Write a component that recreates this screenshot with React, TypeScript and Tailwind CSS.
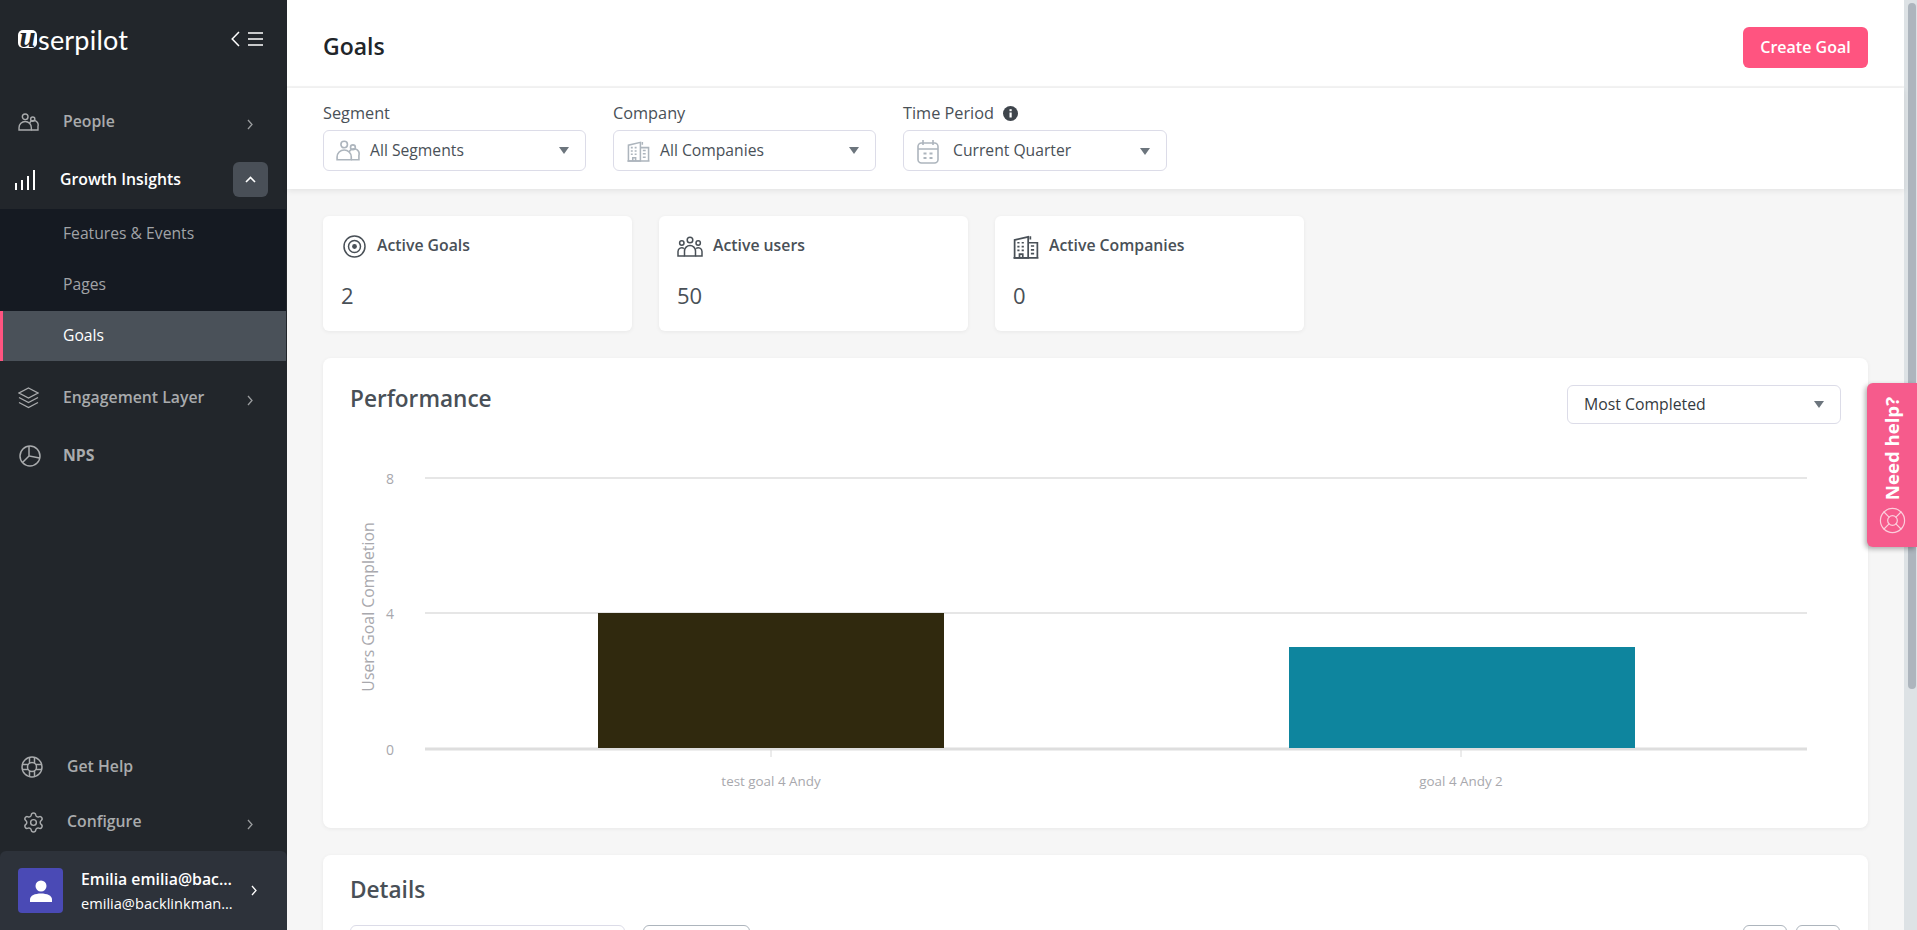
import React from "react";
import { LifeBuoy, Settings } from "lucide-react";

const SmallChevron = ({ className = "" }: { className?: string }) => (
  <svg width="6" height="11" viewBox="0 0 6 11" fill="none" stroke="currentColor" strokeWidth="1.3" className={className}>
    <path d="M1 1l4 4.500L1 10" />
  </svg>
);

const PeopleIcon = ({ className = "" }: { className?: string }) => (
  <svg viewBox="0 0 22 19" fill="none" stroke="currentColor" strokeWidth="1.5" className={className}>
    <circle cx="7.500" cy="4" r="3" />
    <path d="M1 18v-2.500a6.500 6.500 0 0 1 13 0V18z" />
    <circle cx="15.500" cy="6.500" r="2.200" />
    <path d="M12 11.200a4.500 4.500 0 0 1 9 2.800V18h-7" />
  </svg>
);

const BarsIcon = () => (
  <svg width="20" height="20" viewBox="0 0 20 20" fill="#fff">
    <rect x="0" y="13" width="2" height="7" />
    <rect x="6" y="10" width="2" height="10" />
    <rect x="12" y="6" width="2" height="14" />
    <rect x="18" y="0" width="2" height="20" />
  </svg>
);

const LayersIcon = () => (
  <svg width="21" height="22" viewBox="0 0 21 22" fill="none" stroke="currentColor" strokeWidth="1.400">
    <path d="M10.500 1L20 6l-9.500 5L1 6z" />
    <path d="M1 10.500l9.500 5 9.500-5" />
    <path d="M1 15.500l9.500 5 9.500-5" />
  </svg>
);

const PieIcon = () => (
  <svg width="22" height="22" viewBox="0 0 22 22" fill="none" stroke="currentColor" strokeWidth="1.500">
    <circle cx="11" cy="11" r="10" />
    <path d="M10 1v10l10.500 2M10 11l-6.500 6.500" />
  </svg>
);

const HelpWheelIcon = () => (
  <svg width="22" height="22" viewBox="0 0 22 22" fill="none" stroke="currentColor" strokeWidth="1.500">
    <circle cx="11" cy="11" r="10" />
    <circle cx="11" cy="11" r="4.500" />
    <path d="M8.500 1.500v5.500M13.500 1.500v5.500M8.500 15v5.500M13.500 15v5.500M1.500 8.500H7M1.500 13.500H7M15 8.500h5.500M15 13.500h5.500" />
  </svg>
);

const BuildingIcon = ({ className = "" }: { className?: string }) => (
  <svg viewBox="0 0 24 24" fill="none" stroke="currentColor" strokeWidth="1.600" className={className}>
    <path d="M1.500 23V6.500L14 3.500V23z" />
    <path d="M14 9h8.500v14H14M16 3v3M0.500 23h23" />
    <path d="M4 9h2M8 9h2M4 12.500h2M8 12.500h2M4 16h2M8 16h2M6 23v-3.500h3V23M16.500 12h3M16.500 15.500h3M16.500 19h3" />
  </svg>
);

const CalendarIcon = () => (
  <svg width="22" height="25" viewBox="0 0 22 25" fill="none" stroke="#adb5bd" strokeWidth="1.600">
    <rect x="1" y="4" width="20" height="20" rx="3.500" />
    <path d="M6 1v5M16 1v5M1 10h20" />
    <path d="M6.500 14.500h3M12.500 14.500h3M6.500 19h3M12.500 19h3" strokeWidth="2" />
  </svg>
);

const TargetIcon = () => (
  <svg width="23" height="23" viewBox="0 0 23 23" fill="none" stroke="#495057">
    <circle cx="11.500" cy="11.500" r="10.500" strokeWidth="1.500" />
    <circle cx="11.500" cy="11.500" r="6" strokeWidth="1.500" />
    <circle cx="11.500" cy="11.500" r="2.400" fill="#495057" strokeWidth="0" />
  </svg>
);

const UsersIcon = () => (
  <svg width="26" height="21" viewBox="0 0 26 21" fill="none" stroke="#495057" strokeWidth="1.500">
    <circle cx="13" cy="4" r="2.800" />
    <circle cx="4.800" cy="7" r="2.200" />
    <circle cx="21.200" cy="7" r="2.200" />
    <path d="M7.500 20v-5a5.500 5.500 0 0 1 11 0v5z" />
    <path d="M7.500 20H1v-4.500a3.800 3.800 0 0 1 6-3M18.500 20H25v-4.500a3.800 3.800 0 0 0-6-3" />
  </svg>
);

const Caret = () => <span className="ml-auto h-0 w-0 shrink-0 border-x-[5.5px] border-t-[7px] border-x-transparent border-t-[#6c757d]" />;

const NavRow = ({ icon, label, chevron = false, className = "" }: { icon: React.ReactNode; label: string; chevron?: boolean; className?: string }) => (
  <div className={`flex h-[58px] items-center text-[15.8px] text-[#a9abad] ${className}`}>
    {icon}
    <span>{label}</span>
    {chevron && <SmallChevron className="ml-auto mr-[34px] mt-1 text-[#9a9c9e]" />}
  </div>
);

const Sidebar = () => (
  <aside className="flex h-full w-[287px] shrink-0 flex-col bg-[#22262b]">
    {/* Logo */}
    <div className="flex h-[92px] items-center pb-[14px] pl-[18px] pr-[24px]">
      <span className="flex h-[18px] w-[19px] items-center justify-center rounded-[5px] bg-white pb-[3px] font-['Liberation_Serif',serif] text-[29px] font-bold italic leading-[15px] text-[#22262b]">
        u
      </span>
      <span className="ml-[1px] font-['Lato',sans-serif] text-[27px] leading-none tracking-[0.2px] text-white">serpilot</span>
      <div className="ml-auto flex items-center gap-[8px] text-white">
        <svg width="9" height="16" viewBox="0 0 9 16" fill="none" stroke="currentColor" strokeWidth="1.500">
          <path d="M8 1L1.200 8 8 15" />
        </svg>
        <svg width="15" height="14" viewBox="0 0 15 14" fill="none" stroke="currentColor" strokeWidth="1.300">
          <path d="M0 1h15M0 7h15M0 13h15" />
        </svg>
      </div>
    </div>

    <NavRow icon={<span className="flex w-[45px]"><PeopleIcon className="h-[18px] w-[21px]" /></span>} label="People" chevron className="pl-[18px] pt-[2px] font-semibold" />

    <div className="flex h-[59px] items-center pl-[15px] pr-[19px] text-[15.8px] font-semibold text-white">
      <span className="w-[45px]"><BarsIcon /></span>
      <span>Growth Insights</span>
      <span className="ml-auto flex h-[35px] w-[35px] items-center justify-center rounded-[6px] bg-[#494f57]">
        <svg width="11" height="7" viewBox="0 0 11 7" fill="none" stroke="#fff" strokeWidth="1.600">
          <path d="M1 6l4.500-4.500L10 6" />
        </svg>
      </span>
    </div>

    <div className="mr-[1px] text-[15.7px] font-medium">
      <div className="bg-[#151a22] text-[#a1a3a7]">
        <div className="flex h-[51px] items-center pb-[1px] pl-[63px]">Features &amp; Events</div>
        <div className="flex h-[51px] items-center pb-[1px] pl-[63px]">Pages</div>
      </div>
      <div className="flex h-[50px] items-center border-l-[3px] border-[#ff5480] bg-[#4a5159] pb-[1px] pl-[60px] text-white">Goals</div>
    </div>

    <NavRow icon={<span className="flex w-[45px]"><LayersIcon /></span>} label="Engagement Layer" chevron className="mt-[7px] pl-[18px] pt-[2px] font-semibold" />
    <NavRow icon={<span className="flex w-[44px]"><PieIcon /></span>} label="NPS" className="pl-[19px] pt-[2px] font-bold" />

    <div className="mt-auto">
      <NavRow icon={<span className="flex w-[46px]"><HelpWheelIcon /></span>} label="Get Help" className="h-[56px] pl-[21px] pt-[7px] font-semibold" />
      <NavRow icon={<span className="flex w-[45px]"><Settings size={23} strokeWidth={1.500} /></span>} label="Configure" chevron className="h-[56px] pl-[22px] pt-[2px] font-semibold" />
      <div className="mt-[1px] flex h-[79px] items-center rounded-t-[6px] bg-[#2d323a] pl-[18px] pr-[30px] text-white">
        <span className="flex h-[45px] w-[45px] shrink-0 items-center justify-center rounded-[4px] bg-[#4a4ab5]">
          <svg width="24" height="24" viewBox="0 0 24 24" fill="#fff">
            <circle cx="12" cy="7" r="5.500" />
            <path d="M1 23v-2.500C1 16.500 6 14.500 12 14.500s11 2 11 6V23z" />
          </svg>
        </span>
        <div className="ml-[18px] w-[156px] min-w-0">
          <div className="truncate text-[15.8px] font-semibold leading-[20px]">Emilia emilia@backlinkmanager.io</div>
          <div className="mt-[4px] truncate text-[14.6px] leading-[20px]">emilia@backlinkmanager.io</div>
        </div>
        <SmallChevron className="ml-auto" />
      </div>
    </div>
  </aside>
);

const FilterSelect = ({ icon, value, className = "" }: { icon: React.ReactNode; value: string; className?: string }) => (
  <div className={`flex h-[41px] items-center rounded-[6px] border border-[#dcdce8] bg-white pr-[16px] text-[15.7px] text-[#495057] ${className}`}>
    {icon}
    <span>{value}</span>
    <Caret />
  </div>
);

const Filters = () => (
  <div className="relative z-10 flex h-[101px] gap-[27px] bg-white pl-[36px] pt-[15px] shadow-[0_2px_6px_rgba(0,0,0,0.08)]">
    <div>
      <div className="mb-[7px] text-[16.3px] font-medium leading-[20px] text-[#495057]">Segment</div>
      <FilterSelect icon={<span className="mr-[10px] flex w-[24px] text-[#adb5bd]"><PeopleIcon className="h-[21px] w-[24px]" /></span>} value="All Segments" className="w-[263px] pl-[12px]" />
    </div>
    <div>
      <div className="mb-[7px] text-[16.3px] font-medium leading-[20px] text-[#495057]">Company</div>
      <FilterSelect icon={<span className="mr-[10px] flex w-[23px] text-[#adb5bd]"><BuildingIcon className="h-[23px] w-[23px]" /></span>} value="All Companies" className="w-[263px] pl-[13px]" />
    </div>
    <div>
      <div className="mb-[7px] flex items-center gap-[9px] text-[16.3px] font-medium leading-[20px] text-[#495057]">
        Time Period
        <svg width="15" height="15" viewBox="0 0 15 15">
          <circle cx="7.500" cy="7.500" r="7.500" fill="#3f454c" />
          <rect x="6.500" y="6.500" width="2.200" height="5" fill="#fff" />
          <rect x="6.500" y="3.200" width="2.200" height="2" fill="#fff" />
        </svg>
      </div>
      <FilterSelect icon={<span className="mr-[14px] flex w-[22px]"><CalendarIcon /></span>} value="Current Quarter" className="w-[264px] pl-[13px] pt-[1px]" />
    </div>
  </div>
);

const StatCard = ({ icon, label, value, textGap }: { icon: React.ReactNode; label: string; value: string; textGap: string }) => (
  <div className="h-[115px] w-[309px] rounded-[6px] bg-white pl-[18px] shadow-[0_1px_4px_rgba(0,0,0,0.06)]">
    <div className={`flex h-[60px] items-center ${textGap}`}>
      {icon}
      <span className="text-[15.8px] font-semibold text-[#495057]">{label}</span>
    </div>
    <div className="mt-[4px] text-[22px] leading-[30px] text-[#495057]">{value}</div>
  </div>
);

const Chart = () => (
  <svg viewBox="0 0 1545 404" className="block h-[404px] w-full">
    <g stroke="#e6e6e6" strokeWidth="2">
      <path d="M102 54H1484M102 189H1484" />
      <path d="M102 325H1484" stroke="#dedede" strokeWidth="3" />
    </g>
    <path d="M448 326v7M1138 326v7" stroke="#d8d8d8" />
    <rect x="275" y="189" width="346" height="135" fill="#30290e" />
    <rect x="966" y="223" width="346" height="101" fill="#0e859e" />
    <g fontFamily="'Open Sans', sans-serif" fontSize="13.4" fill="#a8a8ad" textAnchor="middle">
      <text x="67" y="60" fontSize="14">8</text>
      <text x="67" y="195" fontSize="14">4</text>
      <text x="67" y="331" fontSize="14">0</text>
      <text x="448" y="362">test goal 4 Andy</text>
      <text x="1138" y="362">goal 4 Andy 2</text>
      <text x="0" y="0" fontSize="15.8" transform="translate(51 183) rotate(-90)">Users Goal Completion</text>
    </g>
  </svg>
);

const NeedHelp = () => (
  <div className="absolute right-0 top-[383px] z-20 flex h-[164px] w-[50px] flex-col items-center rounded-l-[6px] bg-[#f65b8c] pt-[14px] text-white shadow-[-2px_2px_5px_rgba(0,0,0,0.3)]">
    <span className="rotate-180 text-[18.6px] font-bold leading-none [writing-mode:vertical-rl]">Need help?</span>
    <LifeBuoy size={29} strokeWidth={1} className="mt-[6px] opacity-70" />
  </div>
);

export default function App() {
  return (
    <div className="relative flex h-[930px] w-full overflow-hidden bg-[#f6f6f6] font-['Open_Sans',sans-serif]">
      <Sidebar />

      <main className="min-w-0 flex-1">
        {/* Header */}
        <header className="flex h-[88px] items-center justify-between border-b-2 border-[#f4f4f4] bg-white pl-[36px] pr-[36px] pt-[8px]">
          <h1 className="-mt-[2px] text-[23px] font-semibold text-[#212529]">Goals</h1>
          <button className="h-[41px] w-[125px] rounded-[6px] bg-[#ff5480] text-[16px] font-semibold text-white">Create Goal</button>
        </header>

        <Filters />

        <div className="px-[36px] pt-[27px]">
          {/* Stats */}
          <div className="flex gap-[27px]">
            <StatCard icon={<TargetIcon />} label="Active Goals" value="2" textGap="gap-[11px] pl-[2px]" />
            <StatCard icon={<UsersIcon />} label="Active users" value="50" textGap="gap-[10px]" />
            <StatCard icon={<span className="text-[#495057]"><BuildingIcon className="h-[26px] w-[26px]" /></span>} label="Active Companies" value="0" textGap="gap-[10px]" />
          </div>

          {/* Performance */}
          <section className="mt-[27px] h-[470px] rounded-[8px] bg-white shadow-[0_1px_4px_rgba(0,0,0,0.06)]">
            <div className="flex items-start justify-between px-[27px] pt-[27px]">
              <h2 className="-mt-[1px] text-[22.6px] font-semibold leading-[30px] text-[#495057]">Performance</h2>
              <div className="flex h-[39px] w-[274px] items-center rounded-[6px] border border-[#dcdce8] pl-[16px] pr-[16px] text-[15.8px] text-[#343a40]">
                Most Completed
                <Caret />
              </div>
            </div>
            <Chart />
          </section>

          {/* Details */}
          <section className="mt-[27px] h-[200px] rounded-[8px] bg-white px-[27px] pt-[20px] shadow-[0_1px_4px_rgba(0,0,0,0.06)]">
            <h2 className="text-[22.6px] font-semibold leading-[30px] text-[#495057]">Details</h2>
            <div className="mt-[20px] flex gap-[18px]">
              <div className="h-[40px] w-[275px] rounded-[6px] border border-[#dcdce8]" />
              <div className="h-[40px] w-[107px] rounded-[6px] border border-[#adb5bd]" />
              <div className="ml-auto mr-[1px] flex gap-[9px]">
                <div className="h-[40px] w-[44px] rounded-[6px] border border-[#adb5bd]" />
                <div className="h-[40px] w-[44px] rounded-[6px] border border-[#adb5bd]" />
              </div>
            </div>
          </section>
        </div>
      </main>

      {/* Scrollbar */}
      <div className="w-[13px] shrink-0 bg-[#dde2e5] pl-[4px] pt-[3px]">
        <div className="h-[686px] w-[8px] rounded-[4px] bg-[#adb5bd]" />
      </div>

      <NeedHelp />
    </div>
  );
}
